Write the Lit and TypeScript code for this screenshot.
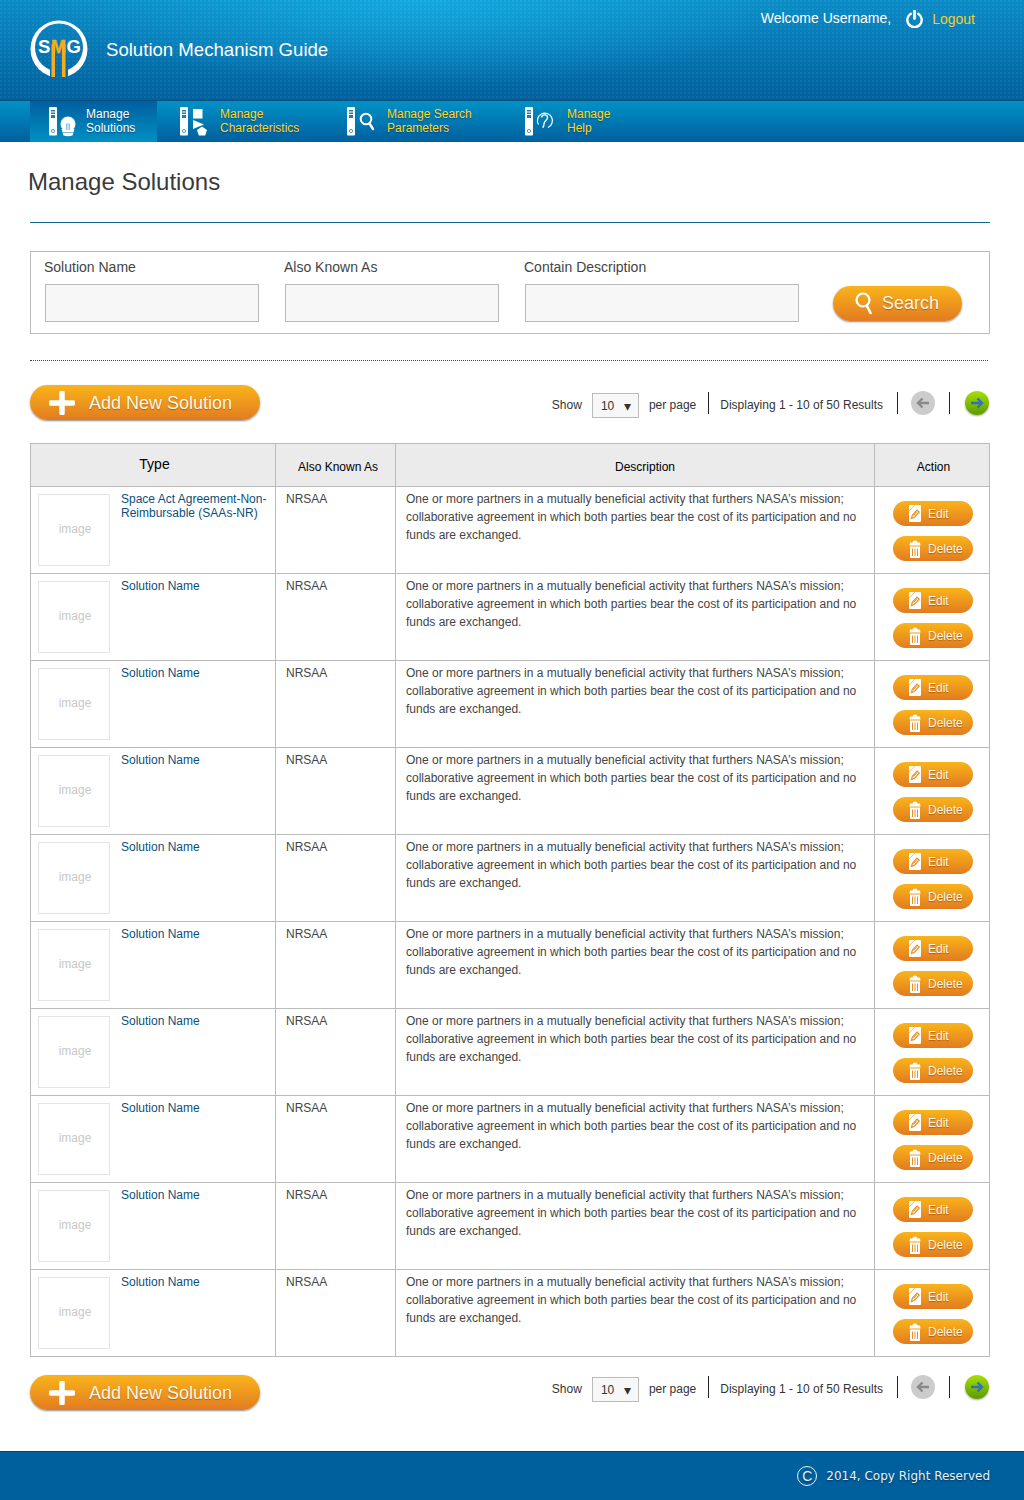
import {LitElement, html, css, svg} from 'lit';
import {customElement} from 'lit/decorators.js';

const DESC = 'One or more partners in a mutually beneficial activity that furthers NASA’s mission; collaborative agreement in which both parties bear the cost of its participation and no funds are exchanged.';

const ROWS = [
  'Space Act Agreement-Non-Reimbursable (SAAs-NR)',
  ...Array(9).fill('Solution Name'),
];

const binder = svg`
  <rect x="0" y="0" width="8" height="28.500" rx="1" fill="#fff"/>
  <rect x="2" y="3" width="4" height="8" fill="#1a7fb5"/>
  <path d="M2 5h4M2 7.500h4" stroke="#fff" stroke-width="1"/>
  <circle cx="4" cy="24" r="1.600" fill="none" stroke="#4a9cc7"/>
`;

const navIcons = {
  bulb: svg`<svg class="nav-icon" width="30" height="30" viewBox="0 0 30 30">
    ${binder}
    <circle cx="19" cy="17" r="7.500" fill="#fff"/>
    <path d="M12.500 22h13l-2 6.500q-4.500 1.500-9 0z" fill="#fff"/>
    <path d="M17.500 23v-6h3v6M19 17v6" fill="none" stroke="#8fc3dc" stroke-width="1"/>
    <path d="M13.500 25.500h11" stroke="#2a8cbc" stroke-width=".6"/>
  </svg>`,
  shapes: svg`<svg class="nav-icon" width="30" height="30" viewBox="0 0 30 30">
    ${binder}
    <rect x="13" y="2" width="9.500" height="9.500" fill="#fff"/>
    <path d="M13 13l11 4.500-11 4.500z" fill="#fff"/>
    <path d="M22 19.500l5 3.500-1.800 5.500h-6.400L17 23z" fill="#fff"/>
  </svg>`,
  search: svg`<svg class="nav-icon" width="30" height="30" viewBox="0 0 30 30">
    ${binder}
    <circle cx="19" cy="12" r="5.300" fill="none" stroke="#fff" stroke-width="2"/>
    <path d="M22.500 16.500l3.500 5.500" stroke="#fff" stroke-width="2.400" stroke-linecap="round"/>
  </svg>`,
  help: svg`<svg class="nav-icon" width="30" height="30" viewBox="0 0 30 30">
    ${binder}
    <path d="M13.500 17.500a7.500 7.500 0 1 1 9.500 3" fill="none" stroke="#fff" stroke-width="1.200"/>
    <path d="M16.500 10.500c.5-3.500 6-3.500 6 0 0 3-3.500 3-3.500 6.500 0 1.500-.5 3-1.500 3.500" fill="none" stroke="#fff" stroke-width="1.400"/>
  </svg>`,
};

const NAV = [
  {cls: 'n1 active', icon: navIcons.bulb, lines: ['Manage', 'Solutions']},
  {cls: 'n2', icon: navIcons.shapes, lines: ['Manage', 'Characteristics']},
  {cls: 'n3', icon: navIcons.search, lines: ['Manage Search', 'Parameters']},
  {cls: 'n4', icon: navIcons.help, lines: ['Manage', 'Help']},
];

@customElement('app-root')
export class AppRoot extends LitElement {
  static styles = css`
    :host {
      display: block;
      width: 1024px;
      background: #fff;
      font-family: "Liberation Sans", Arial, sans-serif;
      color: #333;
    }

    .top {
      display: flex;
      justify-content: space-between;
      align-items: flex-start;
      height: 100px;
      border-bottom: 1px solid #044f7e;
      background:
        radial-gradient(circle at 1px 1px, rgba(255, 255, 255, .06) 1px, transparent 1px) 0 0 / 4px 4px,
        radial-gradient(ellipse 380px 85px at 425px 0, rgba(22, 178, 232, .75), rgba(22, 178, 232, 0)),
        linear-gradient(#0a8cc6, #00609e);
    }
    .brand {
      display: flex;
      align-items: center;
      padding: 20px 0 0 30px;
      color: #fff;
      font-size: 18.600px;
      gap: 18px;
    }
    .brand span { margin-top: 2px; }
    .user {
      display: flex;
      align-items: center;
      padding: 10px 49px 0 0;
      font-size: 14px;
      color: #fff;
    }
    .user span { margin-top: -2px; }
    .user .logout { color: #f7cb2a; margin-left: 9px; padding-top: 2px; }
    .user svg { margin-left: 15px; }

    nav {
      display: flex;
      height: 41px;
      padding-left: 30px;
      background: linear-gradient(#0092c6, #005f9e);
    }
    .item {
      display: flex;
      align-items: center;
      box-sizing: border-box;
      padding-left: 23px;
      font-size: 12px;
      line-height: 14px;
      color: #ffd61e;
      text-shadow: 0 1px 1px rgba(0, 50, 90, .6);
    }
    .item > div { margin-top: -2px; }
    .item.active {
      color: #fff;
      background: linear-gradient(#005f9e, #0090c4);
    }
    .n1 { width: 127px; padding-left: 19px; }
    .n2 { width: 167px; }
    .n3 { width: 178px; }
    .n4 { width: 150px; }
    .nav-icon { flex: none; margin-top: 1px; }
    .n1 .nav-icon { margin-right: 7px; }
    .n2 .nav-icon, .n3 .nav-icon { margin-right: 10px; }
    .n4 .nav-icon { margin-right: 12px; }

    main { padding: 0 34px 0 30px; }
    .head {
      height: 80px;
      border-bottom: 1px solid #0f6a8e;
    }
    h1 {
      margin: 0 0 0 -2px;
      padding-top: 26px;
      font-size: 24px;
      line-height: 28px;
      font-weight: normal;
      color: #3a3a3a;
    }

    .filter {
      display: flex;
      box-sizing: border-box;
      height: 83px;
      margin-top: 28px;
      padding: 6px 0 0 13px;
      border: 1px solid #bbb;
    }
    .field { width: 240px; font-size: 14px; line-height: 18px; color: #444; }
    .field.wide { width: 309px; }
    .field label { display: block; margin-bottom: 8px; }
    .field .box {
      box-sizing: border-box;
      width: 214px;
      height: 38px;
      margin-left: 1px;
      border: 1px solid #bbb;
      background: #f7f7f7;
    }
    .field.wide .box { width: 274px; }

    .pill {
      display: inline-flex;
      align-items: center;
      box-sizing: border-box;
      border-radius: 18px;
      color: #fff6e6;
      background: linear-gradient(#f9b41a, #e27b20);
      box-shadow: 0 1px 2px rgba(0, 0, 0, .45);
      text-shadow: 0 1px 1px rgba(130, 70, 0, .6);
      flex: none;
    }
    .search {
      width: 129px;
      height: 35px;
      margin-top: 28px;
      padding-left: 22px;
      font-size: 18px;
      gap: 9px;
    }
    .add {
      width: 230px;
      height: 35px;
      padding-left: 19px;
      font-size: 18px;
      gap: 14px;
    }
    .add span { margin-top: 2px; }
    .small {
      width: 80px;
      height: 25px;
      padding-left: 16px;
      font-size: 12px;
      gap: 7px;
      box-shadow: none;
    }
    .small svg { flex: none; }

    .dots {
      width: 958px;
      margin-top: 26px;
      border-top: 1px dotted #444;
    }

    .bar {
      display: flex;
      justify-content: space-between;
      align-items: flex-start;
      height: 35px;
      margin-top: 24px;
    }
    .bar.low { margin-top: 18px; }
    .pager {
      display: flex;
      align-items: center;
      height: 24px;
      margin-top: 6px;
      font-size: 12px;
      color: #333;
    }
    .bar.low .pager { margin-top: 0; }
    .pager > span { padding-top: 3px; }
    .select {
      display: flex;
      justify-content: space-between;
      box-sizing: border-box;
      width: 47px;
      height: 25px;
      margin: 3px 10px -2px 10px;
      padding: 5px 7px 0 8px;
      border: 1px solid #bbb;
      background: #f7f7f7;
      font-size: 12px;
      line-height: 14px;
    }
    .select i { font-style: normal; font-size: 14px; color: #333; }
    .sep { width: 1px; height: 22px; background: #222; flex: none; }
    .circle {
      display: flex;
      align-items: center;
      justify-content: center;
      width: 24px;
      height: 24px;
      border-radius: 50%;
      flex: none;
    }
    .prev { background: #ccc; }
    .next {
      margin-right: 1px;
      background: linear-gradient(#a8e000, #5c9a00);
      box-shadow: 0 1px 2px rgba(0, 0, 0, .35);
    }

    table {
      width: 959px;
      margin-top: 23px;
      border-collapse: collapse;
      table-layout: fixed;
      font-size: 12px;
    }
    th, td {
      border: 1px solid #bbb;
      box-sizing: border-box;
      padding: 0;
      vertical-align: top;
    }
    th {
      height: 43px;
      background: #ebebeb;
      font-weight: normal;
      color: #000;
      vertical-align: middle;
      padding-top: 3px;
    }
    th.type { font-size: 14px; padding: 0 0 2px 3px; }
    th.aka { padding-left: 5px; }
    th.desc { padding-left: 20px; }
    th.act { padding-left: 3px; }
    td { height: 87px; color: #444; line-height: 18px; }
    .type-cell {
      display: flex;
      align-items: flex-start;
      padding: 7px 7px 0;
    }
    .thumb {
      display: flex;
      align-items: center;
      justify-content: center;
      box-sizing: border-box;
      width: 72px;
      height: 72px;
      padding: 0 0 2px 2px;
      flex: none;
      border: 1px solid #e4e4e4;
      color: #c8c8c8;
    }
    .name {
      margin: -2px 0 0 11px;
      line-height: 14px;
      color: #0b4f7c;
    }
    .aka-cell { padding: 3px 10px; }
    .desc-cell { padding: 3px 10px; }
    .act-cell {
      display: flex;
      flex-direction: column;
      gap: 10px;
      padding: 14px 0 0 18px;
    }

    footer {
      display: flex;
      align-items: center;
      justify-content: flex-end;
      box-sizing: border-box;
      height: 49px;
      margin-top: 41px;
      padding-right: 34px;
      gap: 9px;
      background: #00609e;
      border-top: 1px solid #04466f;
      color: #e8f1f6;
      font-family: "DejaVu Sans", sans-serif;
      font-size: 12px;
      text-shadow: 0 1px 2px rgba(0, 30, 60, .7);
    }
    .copy {
      display: flex;
      align-items: center;
      justify-content: center;
      box-sizing: border-box;
      width: 20px;
      height: 20px;
      border: 1px solid #e8f1f6;
      border-radius: 50%;
      font-family: "Liberation Sans", sans-serif;
      font-size: 14px;
    }
  `;

  private logo() {
    return svg`<svg width="58" height="58" viewBox="0 0 58 58">
      <defs>
        <mask id="ring">
          <rect width="58" height="58" fill="#fff"/>
          <circle cx="29" cy="27.500" r="24" fill="#000"/>
          <rect x="20" y="40" width="18" height="18" fill="#000"/>
        </mask>
      </defs>
      <circle cx="29" cy="29" r="28.500" fill="#fff" mask="url(#ring)"/>
      <rect x="21.500" y="24" width="3.500" height="33" fill="#f5ad1d"/>
      <rect x="32" y="24" width="3.500" height="33" fill="#f5ad1d"/>
      <text x="8" y="33" font-family="Liberation Sans" font-weight="700" font-size="18.500" fill="#fff">S</text>
      <text x="21" y="33" font-family="Liberation Sans" font-weight="700" font-size="18.500" fill="#f5ad1d" stroke="#f5ad1d" stroke-width=".4" textLength="15" lengthAdjust="spacingAndGlyphs">M</text>
      <text x="36.500" y="33" font-family="Liberation Sans" font-weight="700" font-size="18.500" fill="#fff">G</text>
    </svg>`;
  }

  private power() {
    return svg`<svg width="17" height="18" viewBox="0 0 17 18">
      <path d="M4.800 3.800a7.200 7.200 0 1 0 7.400 0" fill="none" stroke="#fff" stroke-width="2.400" stroke-linecap="round"/>
      <path d="M8.500 1v7.500" stroke="#fff" stroke-width="2.800" stroke-linecap="round"/>
    </svg>`;
  }

  private magnifier() {
    return svg`<svg width="18" height="23" viewBox="0 0 18 23">
      <circle cx="8" cy="8" r="6.500" fill="none" stroke="#fff" stroke-width="2.200"/>
      <path d="M12 14l3.500 7" stroke="#fff" stroke-width="2.600" stroke-linecap="round"/>
    </svg>`;
  }

  private plus() {
    return svg`<svg width="26" height="24" viewBox="0 0 26 24">
      <path d="M13 2v20M2 12h22" stroke="#fff" stroke-width="5.500" stroke-linecap="round"/>
    </svg>`;
  }

  private pencil() {
    return svg`<svg width="12" height="17" viewBox="0 0 12 17">
      <rect width="12" height="17" rx="1" fill="#fff"/>
      <path d="M2.500 13.500l.8-3.200 4.700-5.300 2.200 2-4.700 5.200z" fill="none" stroke="#e5912a" stroke-width="1.200"/>
      <path d="M4.500 10.500l3.500-4" stroke="#e5912a" stroke-width="1"/>
      <path d="M0 6l6-6" stroke="#e9c48f" stroke-width="1"/>
    </svg>`;
  }

  private trash() {
    return svg`<svg width="12" height="18" viewBox="0 0 12 18">
      <path d="M3.500 2.500q0-2 2.500-2t2.500 2h2.500l.5 3h-11l.5-3z" fill="#fff"/>
      <path d="M1 6.500h10v10.500a1 1 0 0 1-1 1h-8a1 1 0 0 1-1-1z" fill="#fff"/>
      <path d="M3.500 8.500v7.500M6 8.500v7.500M8.500 8.500v7.500" stroke="#e5912a" stroke-width="1"/>
    </svg>`;
  }

  private arrow(left: boolean, color: string) {
    const d = left ? 'M14 7H3M7.500 2.500L3 7l4.500 4.500' : 'M2 7h11M8.500 2.500L13 7l-4.500 4.500';
    return svg`<svg width="16" height="14" viewBox="0 0 16 14">
      <path d=${d} fill="none" stroke=${color} stroke-width="2.400"/>
    </svg>`;
  }

  private toolbar(low = false) {
    return html`
      <div class="bar ${low ? 'low' : ''}">
        <div class="pill add">${this.plus()}<span>Add New Solution</span></div>
        <div class="pager">
          <span>Show</span>
          <div class="select">10<i>▾</i></div>
          <span>per page</span>
          <div class="sep" style="margin:0 11px 0 12px"></div>
          <span>Displaying 1 - 10 of 50 Results</span>
          <div class="sep" style="margin:0 13px 0 14px"></div>
          <div class="circle prev">${this.arrow(true, '#8a8a8a')}</div>
          <div class="sep" style="margin:0 15px 0 14px"></div>
          <div class="circle next">${this.arrow(false, '#2f6fc4')}</div>
        </div>
      </div>
    `;
  }

  protected render() {
    return html`
      <header class="top">
        <div class="brand">${this.logo()}<span>Solution Mechanism Guide</span></div>
        <div class="user">
          <span>Welcome Username,</span>
          ${this.power()}
          <span class="logout">Logout</span>
        </div>
      </header>
      <nav>
        ${NAV.map(n => html`
          <div class="item ${n.cls}">
            ${n.icon}
            <div>${n.lines[0]}<br>${n.lines[1]}</div>
          </div>
        `)}
      </nav>
      <main>
        <div class="head"><h1>Manage Solutions</h1></div>
        <section class="filter">
          <div class="field"><label>Solution Name</label><div class="box"></div></div>
          <div class="field"><label>Also Known As</label><div class="box"></div></div>
          <div class="field wide"><label>Contain Description</label><div class="box"></div></div>
          <div class="pill search">${this.magnifier()}<span>Search</span></div>
        </section>
        <div class="dots"></div>
        ${this.toolbar()}
        <table>
          <colgroup>
            <col style="width:245px"><col style="width:120px"><col style="width:479px"><col style="width:115px">
          </colgroup>
          <thead>
            <tr>
              <th class="type">Type</th>
              <th class="aka">Also Known As</th>
              <th class="desc">Description</th>
              <th class="act">Action</th>
            </tr>
          </thead>
          <tbody>
            ${ROWS.map(name => html`
              <tr>
                <td>
                  <div class="type-cell">
                    <div class="thumb">image</div>
                    <div class="name">${name}</div>
                  </div>
                </td>
                <td class="aka-cell">NRSAA</td>
                <td class="desc-cell">${DESC}</td>
                <td>
                  <div class="act-cell">
                    <div class="pill small">${this.pencil()}<span>Edit</span></div>
                    <div class="pill small">${this.trash()}<span>Delete</span></div>
                  </div>
                </td>
              </tr>
            `)}
          </tbody>
        </table>
        ${this.toolbar(true)}
      </main>
      <footer>
        <span class="copy">C</span>
        <span>2014, Copy Right Reserved</span>
      </footer>
    `;
  }
}
